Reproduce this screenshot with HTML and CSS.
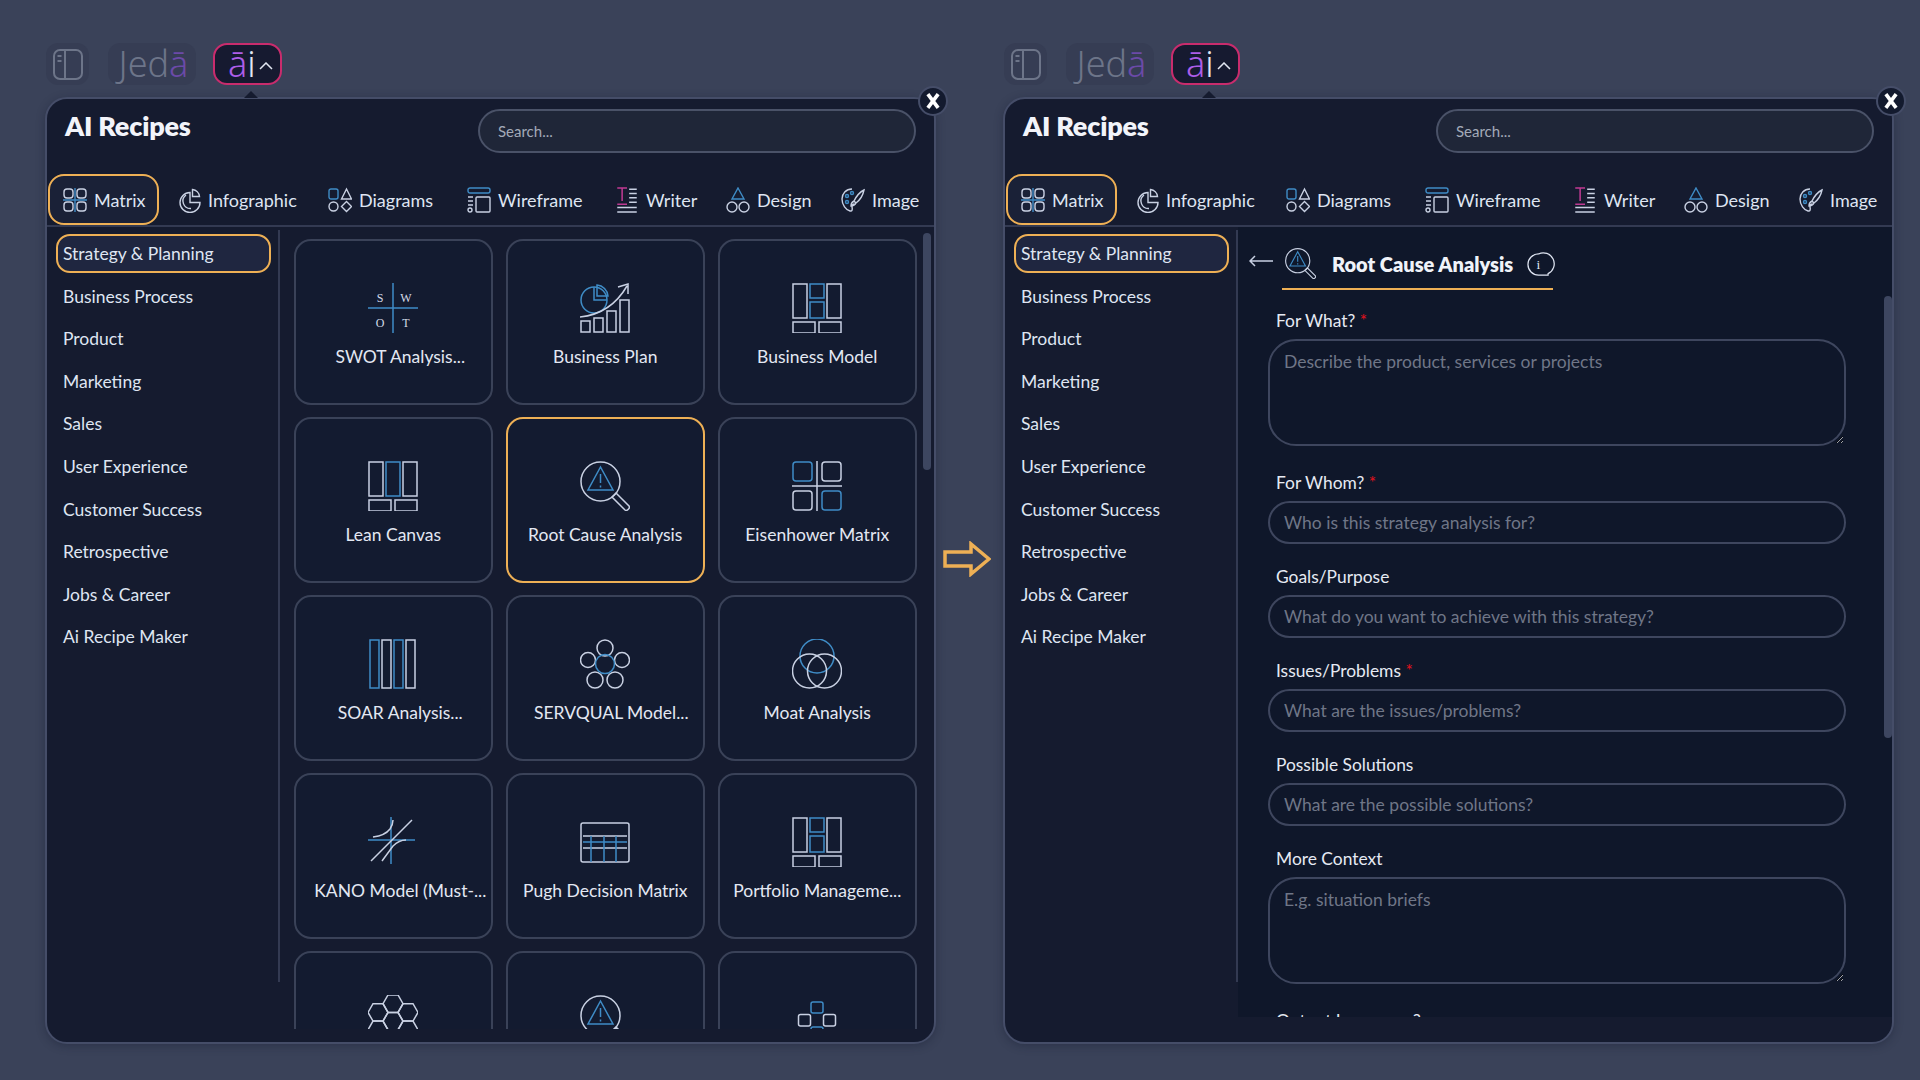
FILE: index.html
```html
<!DOCTYPE html>
<html lang="en">
<head>
<meta charset="utf-8">
<title>AI Recipes</title>
<link rel="stylesheet" href="styles.css">
</head>
<body>
<svg class="defs" width="0" height="0" aria-hidden="true">
  <defs>
    <symbol id="toggle" viewBox="0 0 30 31"><rect x="1" y="1" width="28" height="29" rx="6"/><path d="M12 1v29M4.500 7h4M4.500 12h4"/></symbol>
    <symbol id="chev" viewBox="0 0 14 8"><path d="M1 7l6-6 6 6"/></symbol>
    <symbol id="close" viewBox="0 0 14 14"><path d="M2.500 1l9 12M11.500 1l-9 12"/></symbol>

    <symbol id="t-matrix" viewBox="0 0 24 24"><g class="w"><rect x="1" y="1" width="9" height="9" rx="3"/><rect x="14" y="1" width="9" height="9" rx="3"/><rect x="1" y="14" width="9" height="9" rx="3"/><rect x="14" y="14" width="9" height="9" rx="3"/></g><path class="b" d="M12 0v24M0 12h24"/></symbol>
    <symbol id="t-info" viewBox="0 0 24 24"><g class="w"><path d="M13 4.500A10 10 0 1 0 23 14.500H13z"/><path d="M15.500 1.500a8 8 0 0 1 7 7h-7z"/><path d="M9 7a7.500 7.500 0 0 0 5 13.500"/></g></symbol>
    <symbol id="t-diag" viewBox="0 0 24 24"><rect class="b" x="1" y="1" width="9" height="10" rx="2"/><g class="w"><path d="M18.500 1l5 10h-10z"/><circle cx="5.500" cy="18.500" r="4.500"/><path d="M18.500 13.500l5 5-5 5-5-5z"/></g></symbol>
    <symbol id="t-wire" viewBox="0 0 24 26"><rect class="b" x="1" y="1" width="22" height="5" rx="2"/><g class="w"><rect x="9" y="10" width="14" height="15" rx="1"/><path d="M1 10h5M1 14h5M1 18h5"/><circle cx="3" cy="23" r="2"/></g></symbol>
    <symbol id="t-writer" viewBox="0 0 20 24"><path class="p" d="M1 1h9M5.500 1v12M1 16h9"/><path class="w" d="M12 2h7M12 6h7M12 10h7M12 14h7M1 19h18M1 23h18"/></symbol>
    <symbol id="t-design" viewBox="0 0 24 26"><path class="b" d="M12 1l6 11H6z"/><g class="w"><circle cx="6" cy="20" r="5"/><circle cx="18" cy="20" r="5"/></g></symbol>
    <symbol id="t-image" viewBox="0 0 24 24"><path class="w" d="M11 1C5 1 1 5.500 1 11c0 6 4 11 8 12 2.500.500 2.500-2 2-4-.500-2 1-3 2.500-3"/><g class="b"><circle cx="6" cy="8" r="1.500"/><circle cx="11" cy="5" r="1.500"/><circle cx="6" cy="14" r="1.500"/></g><path class="w" d="M23 2c-4 2-8 7-10 11l2 2c4-3 7-8 8-13zM13 13c-2 1-3 3-3 5 2 0 4-1 5-3"/></symbol>

    <symbol id="c-plan" viewBox="0 0 50 50"><circle class="b" cx="14" cy="17" r="13"/><path class="b" d="M14 4v13h13"/><path class="b" d="M17 2a12 12 0 0 1 11 11H17z"/><g class="w"><rect x="1" y="38" width="9" height="11"/><rect x="14" y="35" width="9" height="14"/><rect x="27" y="28" width="9" height="21"/><rect x="40" y="17" width="9" height="32"/><path d="M0 34c20-2 36-12 47-31M38 4l10-3 0 10"/></g></symbol>
    <symbol id="c-model" viewBox="0 0 50 50"><g class="w"><rect x="1" y="1" width="14" height="34"/><rect x="35" y="1" width="14" height="34"/><rect x="1" y="39" width="22" height="11"/><rect x="27" y="39" width="22" height="11"/></g><g class="b"><rect x="18" y="1" width="14" height="14"/><rect x="18" y="19" width="14" height="16"/></g></symbol>
    <symbol id="c-lean" viewBox="0 0 50 50"><g class="w"><rect x="1" y="1" width="14" height="34"/><rect x="35" y="1" width="14" height="34"/><rect x="1" y="39" width="22" height="11"/><rect x="27" y="39" width="22" height="11"/></g><rect class="b" x="18" y="1" width="14" height="34"/></symbol>
    <symbol id="c-root" viewBox="0 0 50 50"><g class="w"><circle cx="20.500" cy="20.500" r="19.500"/><path d="M32 36l4-4 13 13c1.500 2-2 5.500-4 4z"/></g><path class="b" d="M20.500 6L33 29H8z"/><path class="b" d="M20.500 13v9M20.500 24.500v2"/></symbol>
    <symbol id="c-eisen" viewBox="0 0 50 50"><path class="w" d="M0 25h50M25 0v50"/><g class="b"><rect x="1" y="1" width="19" height="19" rx="3"/><rect x="30" y="30" width="19" height="19" rx="3"/></g><g class="w"><rect x="30" y="1" width="19" height="19" rx="3"/><rect x="1" y="30" width="19" height="19" rx="3"/></g></symbol>
    <symbol id="c-soar" viewBox="0 0 50 50"><g class="b"><rect x="2" y="1" width="9" height="48"/><rect x="26" y="1" width="9" height="48"/></g><g class="w"><rect x="14" y="1" width="9" height="48"/><rect x="38" y="1" width="9" height="48"/></g></symbol>
    <symbol id="c-serv" viewBox="0 0 50 50"><g class="w"><circle cx="25" cy="9" r="8"/><circle cx="8" cy="21" r="7.500"/><circle cx="42" cy="21" r="7.500"/><circle cx="15" cy="41" r="8"/><circle cx="35" cy="41" r="8"/></g><circle class="b" cx="25" cy="25" r="9.500"/></symbol>
    <symbol id="c-moat" viewBox="0 0 50 50"><circle class="b" cx="25" cy="17" r="17"/><g class="w"><circle cx="17.500" cy="32" r="17"/><circle cx="32.500" cy="32" r="17"/></g></symbol>
    <symbol id="c-kano" viewBox="0 0 50 50"><path class="b" d="M23 0v47M0 23h47"/><path class="w" d="M3 44L44 3M14 44l11-15c4-4 8-6 13-6M5 20c8-1 14-4 17-8 2-3 3-5 3-9"/></symbol>
    <symbol id="c-pugh" viewBox="0 0 50 50"><rect class="w" x="1" y="6" width="48" height="39" rx="2"/><path class="w" d="M3 19h44M3 31h44"/><path class="b" d="M11 19v26M24 19v26M36 19v26M3 25h44"/></symbol>
    <symbol id="c-hex" viewBox="0 0 50 50"><g class="w"><path d="M20 0h10l5 8.700-5 8.700H20l-5-8.700z"/><path d="M5 8.700h10l5 8.700-5 8.700H5L0 17.400z"/><path d="M35 8.700h10l5 8.700-5 8.700H35l-5-8.700z"/><path d="M20 17.400h10l5 8.700-5 8.700H20l-5-8.700z"/><path d="M5 26.100h10l5 8.700-5 8.700H5L0 34.800z"/><path d="M35 26.100h10l5 8.700-5 8.700H35l-5-8.700z"/><path d="M20 34.800h10l5 8.700-5 6.500H20l-5-6.500z"/></g></symbol>
    <symbol id="c-nodes" viewBox="0 0 50 50"><g class="b"><rect x="19" y="7" width="12" height="11" rx="2"/><rect x="19" y="32" width="12" height="11" rx="2"/></g><g class="w"><rect x="6.500" y="19.500" width="12" height="11.500" rx="2"/><rect x="31.500" y="19.500" width="12" height="11.500" rx="2"/></g></symbol>
  </defs>
</svg>

<main class="stage">
  <section class="screen">
    <div class="topbar">
      <div class="chip chip-toggle"><svg class="ico-toggle"><use href="#toggle"/></svg></div>
      <div class="chip chip-brand">Jed<span class="macron">ā</span></div>
      <div class="ai-btn"><span class="macron-ai">ā</span><span class="ai-i">i</span><svg class="ico-chev"><use href="#chev"/></svg></div>
    </div>
    <div class="panel">
      <span class="caret"></span>
      <button class="close" type="button" aria-label="Close"><svg class="ico-close"><use href="#close"/></svg></button>
      <header class="head">
        <h1 class="title">AI Recipes</h1>
        <input class="search" placeholder="Search...">
      </header>
      <nav class="tabs">
        <a class="tab tab-on"><svg class="tab-ico"><use href="#t-matrix"/></svg>Matrix</a>
        <a class="tab"><svg class="tab-ico"><use href="#t-info"/></svg>Infographic</a>
        <a class="tab"><svg class="tab-ico"><use href="#t-diag"/></svg>Diagrams</a>
        <a class="tab"><svg class="tab-ico"><use href="#t-wire"/></svg>Wireframe</a>
        <a class="tab"><svg class="tab-ico"><use href="#t-writer"/></svg>Writer</a>
        <a class="tab"><svg class="tab-ico"><use href="#t-design"/></svg>Design</a>
        <a class="tab"><svg class="tab-ico"><use href="#t-image"/></svg>Image</a>
      </nav>
      <div class="body">
        <aside class="side">
          <a class="side-item side-on">Strategy &amp; Planning</a>
          <a class="side-item">Business Process</a>
          <a class="side-item">Product</a>
          <a class="side-item">Marketing</a>
          <a class="side-item">Sales</a>
          <a class="side-item">User Experience</a>
          <a class="side-item">Customer Success</a>
          <a class="side-item">Retrospective</a>
          <a class="side-item">Jobs &amp; Career</a>
          <a class="side-item">Ai Recipe Maker</a>
        </aside>
        <div class="gallery">
          <div class="grid">
            <article class="card"><svg class="card-ico" viewBox="0 0 50 50"><path class="b" d="M25 0v50M0 25h50"/><g class="swot"><text x="12" y="19">S</text><text x="38" y="19">W</text><text x="12" y="44">O</text><text x="38" y="44">T</text></g></svg><span class="card-name trunc">SWOT Analysis...</span></article>
            <article class="card"><svg class="card-ico"><use href="#c-plan"/></svg><span class="card-name">Business Plan</span></article>
            <article class="card"><svg class="card-ico"><use href="#c-model"/></svg><span class="card-name">Business Model</span></article>
            <article class="card"><svg class="card-ico"><use href="#c-lean"/></svg><span class="card-name">Lean Canvas</span></article>
            <article class="card card-on"><svg class="card-ico"><use href="#c-root"/></svg><span class="card-name">Root Cause Analysis</span></article>
            <article class="card"><svg class="card-ico"><use href="#c-eisen"/></svg><span class="card-name">Eisenhower Matrix</span></article>
            <article class="card"><svg class="card-ico"><use href="#c-soar"/></svg><span class="card-name trunc">SOAR Analysis...</span></article>
            <article class="card"><svg class="card-ico"><use href="#c-serv"/></svg><span class="card-name trunc-s">SERVQUAL Model...</span></article>
            <article class="card"><svg class="card-ico"><use href="#c-moat"/></svg><span class="card-name">Moat Analysis</span></article>
            <article class="card"><svg class="card-ico"><use href="#c-kano"/></svg><span class="card-name trunc">KANO Model (Must-...</span></article>
            <article class="card"><svg class="card-ico"><use href="#c-pugh"/></svg><span class="card-name">Pugh Decision Matrix</span></article>
            <article class="card"><svg class="card-ico"><use href="#c-model"/></svg><span class="card-name">Portfolio Manageme...</span></article>
            <article class="card"><svg class="card-ico"><use href="#c-hex"/></svg></article>
            <article class="card"><svg class="card-ico"><use href="#c-root"/></svg></article>
            <article class="card"><svg class="card-ico"><use href="#c-nodes"/></svg></article>
          </div>
          <span class="thumb thumb-left"></span>
        </div>
      </div>
    </div>
  </section>

  <div class="flow-arrow">
    <svg class="ico-arrow" viewBox="0 0 48 36"><path d="M2 11h26V3l18 15-18 15v-8H2z"/></svg>
  </div>

  <section class="screen">
    <div class="topbar">
      <div class="chip chip-toggle"><svg class="ico-toggle"><use href="#toggle"/></svg></div>
      <div class="chip chip-brand">Jed<span class="macron">ā</span></div>
      <div class="ai-btn"><span class="macron-ai">ā</span><span class="ai-i">i</span><svg class="ico-chev"><use href="#chev"/></svg></div>
    </div>
    <div class="panel">
      <span class="caret"></span>
      <button class="close" type="button" aria-label="Close"><svg class="ico-close"><use href="#close"/></svg></button>
      <header class="head">
        <h1 class="title">AI Recipes</h1>
        <input class="search" placeholder="Search...">
      </header>
      <nav class="tabs">
        <a class="tab tab-on"><svg class="tab-ico"><use href="#t-matrix"/></svg>Matrix</a>
        <a class="tab"><svg class="tab-ico"><use href="#t-info"/></svg>Infographic</a>
        <a class="tab"><svg class="tab-ico"><use href="#t-diag"/></svg>Diagrams</a>
        <a class="tab"><svg class="tab-ico"><use href="#t-wire"/></svg>Wireframe</a>
        <a class="tab"><svg class="tab-ico"><use href="#t-writer"/></svg>Writer</a>
        <a class="tab"><svg class="tab-ico"><use href="#t-design"/></svg>Design</a>
        <a class="tab"><svg class="tab-ico"><use href="#t-image"/></svg>Image</a>
      </nav>
      <div class="body body-form">
        <aside class="side">
          <a class="side-item side-on">Strategy &amp; Planning</a>
          <a class="side-item">Business Process</a>
          <a class="side-item">Product</a>
          <a class="side-item">Marketing</a>
          <a class="side-item">Sales</a>
          <a class="side-item">User Experience</a>
          <a class="side-item">Customer Success</a>
          <a class="side-item">Retrospective</a>
          <a class="side-item">Jobs &amp; Career</a>
          <a class="side-item">Ai Recipe Maker</a>
        </aside>
        <div class="detail">
          <div class="detail-head">
            <svg class="ico-back" viewBox="0 0 24 12"><path d="M24 6H1M6 1L1 6l5 5"/></svg>
            <div class="detail-title">
              <svg class="detail-ico"><use href="#c-root"/></svg>
              <h2 class="detail-name">Root Cause Analysis</h2>
              <svg class="ico-info" viewBox="0 0 24 24"><path d="M12 1a11 11 0 1 0 0 22h10v-1.500A11 11 0 0 0 12 1z"/><text x="12" y="17">i</text></svg>
            </div>
          </div>
          <form class="form">
            <label class="field field-area"><span class="lab">For What? <em>*</em></span><textarea class="area" placeholder="Describe the product, services or projects"></textarea></label>
            <label class="field"><span class="lab">For Whom? <em>*</em></span><input class="inp" placeholder="Who is this strategy analysis for?"></label>
            <label class="field"><span class="lab">Goals/Purpose</span><input class="inp" placeholder="What do you want to achieve with this strategy?"></label>
            <label class="field"><span class="lab">Issues/Problems <em>*</em></span><input class="inp" placeholder="What are the issues/problems?"></label>
            <label class="field"><span class="lab">Possible Solutions</span><input class="inp" placeholder="What are the possible solutions?"></label>
            <label class="field field-area"><span class="lab">More Context</span><textarea class="area" placeholder="E.g. situation briefs"></textarea></label>
            <label class="field"><span class="lab">Output Language ?</span></label>
          </form>
          <span class="thumb thumb-right"></span>
        </div>
      </div>
    </div>
  </section>
</main>
</body>
</html>
```

FILE: styles.css
```css
* { box-sizing: border-box; }
html, body { margin: 0; height: 100%; }
body {
  background: #3a4259;
  color: #dfe5f2;
  font-family: "Lato", "Open Sans", sans-serif;
  font-size: 17px;
  overflow: hidden;
}
.defs { position: absolute; }
.stage { display: flex; padding: 43px 0 0 45px; }
.screen { width: 891px; flex: none; }

/* top bar */
.topbar { display: flex; align-items: center; height: 42px; padding-left: 1px; }
.chip { height: 42px; background: #363d54; border-radius: 12px; display: flex; align-items: center; justify-content: center; }
.chip-toggle { width: 43px; }
.chip-brand { width: 88px; margin-left: 19px; padding-left: 3px; color: #6d7589; font: 300 36px/42px "Noto Sans", sans-serif; }
.macron { color: #6b4aa8; }
.ico-toggle { width: 30px; height: 31px; fill: none; stroke: #6d7589; stroke-width: 2; }
.ai-btn {
  display: flex; align-items: center; width: 69px; height: 42px; margin-left: 17px; padding-left: 13px;
  background: #161a30; border: 2px solid #c92c6d; border-radius: 14px;
  font: 300 36px/38px "Noto Sans", sans-serif;
}
.macron-ai { color: #ad5ee8; }
.ai-i { color: #e3e7f2; }
.ico-chev { width: 14px; height: 8px; margin-left: 3px; margin-top: 4px; fill: none; stroke: #e3e7f2; stroke-width: 1.500; }

/* panel */
.panel {
  position: relative; display: flex; flex-direction: column;
  height: 947px; margin-top: 12px;
  background: #151b2f; border: 2px solid #454d68; border-radius: 22px;
  box-shadow: 0 2px 8px rgba(20, 25, 45, .35);
}
.caret {
  position: absolute; left: 197px; top: -8px; width: 0; height: 0;
  border-left: 7px solid transparent; border-right: 7px solid transparent; border-bottom: 7px solid #151b2f;
}
.close {
  position: absolute; right: -14px; top: -13px; width: 30px; height: 30px; padding: 0;
  display: flex; align-items: center; justify-content: center;
  background: #131a2e; border: 2px solid #454d68; border-radius: 50%;
}
.ico-close { width: 16px; height: 16px; fill: none; stroke: #fff; stroke-width: 3.200; }

.head { display: flex; justify-content: space-between; height: 75px; padding: 10px 18px 0 18px; }
.title { margin: 2px 0 0; font-size: 27px; line-height: 30px; font-weight: 800; color: #f2f4fa; letter-spacing: -.2px; }
.search {
  width: 438px; height: 44px; padding: 0 18px; background: #1f2638; color: #a3aab8;
  border: 2px solid #4a5268; border-radius: 22px; font: 15px "Lato", sans-serif; outline: none;
}
.search::placeholder { color: #a3aab8; }

/* tabs */
.tabs {
  display: grid; grid-template-columns: 129px 151px 139px 148px 111px 115px auto;
  height: 53px; padding-left: 1px; border-bottom: 2px solid #333a52;
}
.tab { display: flex; align-items: center; height: 51px; gap: 7px; font-size: 18px; color: #dfe5f2; }
.tab-ico { width: 24px; height: 26px; fill: none; stroke-width: 1.400; flex: none; }
.tab-on { justify-self: start; width: 111px; padding-left: 13px; border: 2px solid #eeb055; border-radius: 16px; background: #1a2137; }
.w { stroke: #c9d1e3; fill: none; }
.b { stroke: #3f8cc6; fill: none; }
.p { stroke: #c03a93; fill: none; }

/* body */
.body { display: flex; height: 802px; overflow: hidden; }
.body-form { height: 790px; }
.side {
  display: flex; flex-direction: column; gap: 3.600px; flex: none; align-self: flex-start;
  width: 233px; height: 752px; margin-top: 3px; padding: 4px 7px 0 9px; border-right: 2px solid #333a52;
}
.side-item { display: flex; align-items: center; height: 39px; padding-left: 5px; border: 2px solid transparent; border-radius: 14px; font-size: 17.500px; color: #dfe5f2; }
.side-on { border-color: #eeb055; background: #1f2640; }

/* gallery */
.gallery { position: relative; flex: 1; padding: 12px 0 0 14px; }
.grid { display: grid; grid-template-columns: repeat(3, 198.500px); grid-auto-rows: 166px; gap: 12px 13.500px; }
.card {
  display: flex; flex-direction: column; align-items: center;
  padding-top: 42px; background: #131b30; border: 2px solid #3a4258; border-radius: 17px;
}
.card-on { border-color: #eeb055; }
.card-ico { width: 50px; height: 50px; fill: none; stroke-width: 1.500; flex: none; overflow: visible; }
.card-name { margin-top: 12px; font-size: 17.500px; line-height: 24px; color: #e3e8f3; white-space: nowrap; }
.trunc { padding-left: 14px; }
.trunc-s { padding-left: 12px; }
.swot text { font: 12px "Liberation Serif", serif; fill: #d5dbe9; stroke: none; text-anchor: middle; }
.thumb { position: absolute; width: 8px; background: #3d4660; border-radius: 4px; }
.thumb-left { right: 3px; top: 6px; height: 237px; }

/* detail */
.detail { position: relative; flex: 1; background: #0f172a; padding-top: 21px; overflow: hidden; }
.detail-head { display: flex; align-items: flex-start; }
.ico-back { width: 24px; height: 12px; margin: 7px 0 0 11px; fill: none; stroke: #c9d1e3; stroke-width: 1.500; flex: none; }
.detail-title { display: flex; align-items: flex-start; width: 271px; height: 42px; margin-left: 9px; padding-left: 3px; border-bottom: 2px solid #eeb055; }
.detail-ico { width: 31px; height: 31px; fill: none; stroke-width: 1.800; flex: none; }
.detail-name { margin: 2px 0 0 16px; font-size: 20px; line-height: 28px; font-weight: 800; color: #f0f3f9; white-space: nowrap; }
.ico-info { width: 23px; height: 23px; margin: 5px 0 0 14px; fill: none; stroke: #dfe5f2; stroke-width: 1.300; overflow: visible; flex: none; }
.ico-info text { font: 14px "Liberation Serif", serif; fill: #dfe5f2; stroke: none; text-anchor: middle; }

.form { display: flex; flex-direction: column; gap: 23px; width: 578px; margin: 21px 0 0 30px; }
.field { display: flex; flex-direction: column; gap: 8px; }
.field-area { margin-bottom: 4px; }
.lab { height: 20px; padding-left: 8px; font-size: 17.400px; line-height: 20px; color: #e6eaf3; }
.lab em { color: #e2111c; font-style: normal; }
.inp, .area {
  display: block; width: 578px; background: #0f172a; color: #dfe5f2; outline: none;
  border: 2px solid #3e465e; font: 17.500px "Lato", sans-serif;
}
.inp { height: 43px; padding: 0 14px; border-radius: 21.500px; }
.area { height: 107px; padding: 10px 14px; border-radius: 28px; resize: vertical; }
.inp::placeholder, .area::placeholder { color: #6f7687; }
.thumb-right { right: 0; top: 69px; height: 442px; }

/* arrow */
.flow-arrow { flex: none; width: 67px; display: flex; justify-content: center; padding: 498px 5px 0 0; }
.ico-arrow { width: 48px; height: 36px; fill: none; stroke: #eeb055; stroke-width: 3.500; }
```
